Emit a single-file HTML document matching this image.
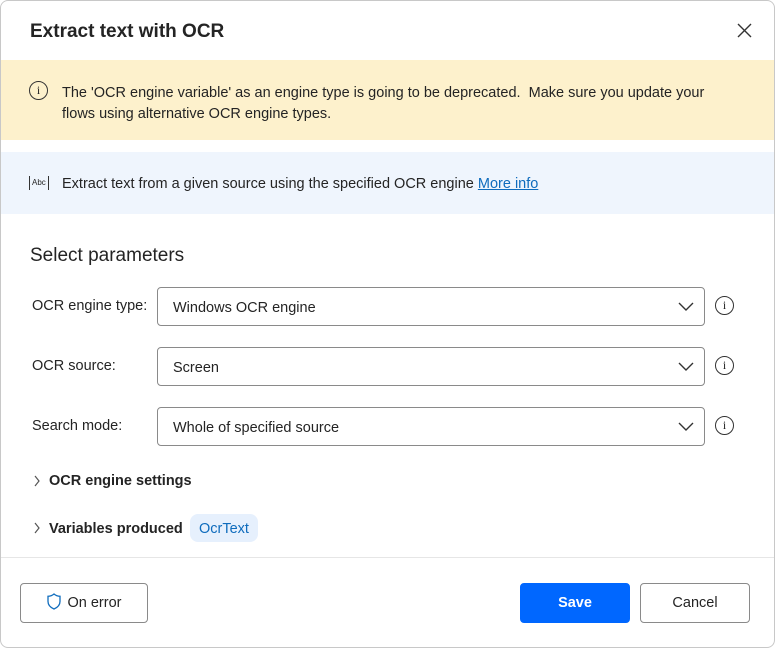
<!DOCTYPE html>
<html><head><style>
*{box-sizing:border-box;margin:0;padding:0}
body{width:775px;height:648px;background:#fff;font-family:"Liberation Sans",sans-serif;color:#242424;position:relative;overflow:hidden}
.frame{position:absolute;left:0;top:0;width:775px;height:648px;border:1px solid #c8c8c8;border-radius:8px}
.abs{position:absolute}
.title{left:30px;top:21px;font-size:19px;font-weight:bold;color:#242424}
.warn{left:1px;top:60px;width:773px;height:80px;background:#fdf1cc}
.info{left:1px;top:152px;width:773px;height:62px;background:#eff5fd}
.t14{font-size:14.5px}
.dd{left:157px;width:548px;height:39px;border:1px solid #8a8a8a;border-radius:4px;font-size:14.5px;padding:12px 15px}
.lbl{left:32px;font-size:14.5px}
.ic{width:19px;height:19px;border:1.5px solid #333;border-radius:50%;font-size:12px;text-align:center;line-height:16px;font-family:"Liberation Serif",serif}
.btn{top:583px;height:40px;border:1px solid #8a8a8a;border-radius:4px;font-size:14.5px;text-align:center;line-height:38px;color:#242424}
</style></head><body>
<div class="frame"></div>
<div class="abs title">Extract text with OCR</div>
<svg class="abs" style="left:737px;top:23px" width="15" height="15" viewBox="0 0 15 15"><path d="M1 1L14 14M14 1L1 14" stroke="#333" stroke-width="1.4"/></svg>
<div class="abs warn"></div>
<div class="abs ic" style="left:29px;top:81px">i</div>
<div class="abs t14" style="left:62px;top:83px;line-height:21px;width:665px">The 'OCR engine variable' as an engine type is going to be deprecated.&nbsp; Make sure you update your flows using alternative OCR engine types.</div>
<div class="abs info"></div>
<div class="abs" style="left:29px;top:176px;font-size:8px;line-height:14px;border-left:1px solid #333;border-right:1px solid #333;padding:0 2px;height:14px">Abc</div>
<div class="abs t14" style="left:62px;top:176px">Extract text from a given source using the specified OCR engine <span style="color:#0f6cbd;text-decoration:underline">More info</span></div>
<div class="abs" style="left:30px;top:245px;font-size:19px">Select parameters</div>

<div class="abs lbl" style="top:298px">OCR engine type:</div>
<div class="abs dd" style="top:287px">Windows OCR engine</div>
<div class="abs lbl" style="top:358px">OCR source:</div>
<div class="abs dd" style="top:347px">Screen</div>
<div class="abs lbl" style="top:418px">Search mode:</div>
<div class="abs dd" style="top:407px">Whole of specified source</div>
<svg class="abs" style="left:678px;top:300px" width="16" height="140" viewBox="0 0 16 140"><g fill="none" stroke="#333" stroke-width="1.4"><path d="M1 3L8 10L15 3"/><path d="M1 63L8 70L15 63"/><path d="M1 123L8 130L15 123"/></g></svg>
<div class="abs ic" style="left:715px;top:296px">i</div>
<div class="abs ic" style="left:715px;top:356px">i</div>
<div class="abs ic" style="left:715px;top:416px">i</div>

<svg class="abs" style="left:33px;top:475px" width="8" height="60" viewBox="0 0 8 60"><g fill="none" stroke="#555" stroke-width="1.2"><path d="M2 1L6 6L2 11"/><path d="M2 48L6 53L2 58"/></g></svg>
<div class="abs t14" style="left:49px;top:473px;font-weight:bold">OCR engine settings</div>
<div class="abs t14" style="left:49px;top:521px;font-weight:bold">Variables produced</div>
<div class="abs t14" style="left:190px;top:514px;background:#e6f0fd;color:#0f6cbd;border-radius:8px;padding:7px 9px 6px 9px;height:28px">OcrText</div>
<div class="abs" style="left:1px;top:557px;width:773px;height:1px;background:#e6e6e6"></div>

<div class="abs btn" style="left:20px;width:128px"><svg style="vertical-align:-3px;margin-right:7px" width="14" height="17" viewBox="0 0 14 17"><path d="M7 1C5 2.6 3 3.3 1 3.3V8.5C1 12 3.5 14.5 7 16C10.5 14.5 13 12 13 8.5V3.3C11 3.3 9 2.6 7 1Z" fill="none" stroke="#0f6cbd" stroke-width="1.3"/></svg>On error</div>
<div class="abs btn" style="left:520px;width:110px;background:#0067ff;border-color:#0067ff;color:#fff;font-weight:bold">Save</div>
<div class="abs btn" style="left:640px;width:110px">Cancel</div>
</body></html>
